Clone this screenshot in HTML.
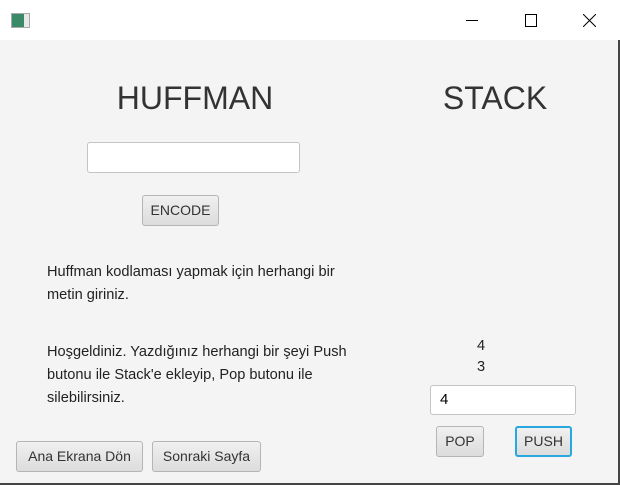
<!DOCTYPE html><html><head><style>
body{margin:0;width:620px;height:485px;overflow:hidden;background:#f4f4f4;font-family:"Liberation Sans",sans-serif;position:relative}
.tb{position:absolute;left:0;top:0;width:620px;height:40px;background:#fff}
.a{position:absolute}
.btn{position:absolute;box-sizing:border-box;border:1px solid #b5b5b5;border-radius:3px;background:linear-gradient(#f0f0f0,#dcdcdc);font-size:14px;color:#333;text-align:center}
.fld{position:absolute;box-sizing:border-box;border:1px solid #c4c4c4;border-radius:3px;background:#fff}
.t{position:absolute;font-size:14.6px;color:#222;line-height:23px}
</style></head><body>
<div class="tb"></div>
<div class="a" style="left:11px;top:13px;width:17px;height:13px;border:1px solid #aaa;background:linear-gradient(90deg,#3a8a6a 70%,#e8e8e8 70%)"></div>
<div class="a" style="left:466px;top:20px;width:12px;height:1px;background:#000"></div>
<div class="a" style="left:525px;top:14px;width:10px;height:11px;border:1px solid #000"></div>
<svg class="a" style="left:583px;top:14px" width="13" height="13"><path d="M0 0L13 13M13 0L0 13" stroke="#000" stroke-width="1"/></svg>
<div class="a" style="left:0;top:80px;width:390px;text-align:center;font-size:32px;color:#333">HUFFMAN</div>
<div class="a" style="left:400px;top:80px;width:190px;text-align:center;font-size:32px;color:#333">STACK</div>
<div class="fld" style="left:87px;top:142px;width:213px;height:31px"></div>
<div class="btn" style="left:142px;top:195px;width:77px;height:31px;line-height:29px">ENCODE</div>
<div class="t" style="left:47px;top:261px">Huffman kodlaması yapmak için herhangi bir<br>metin giriniz.</div>
<div class="t" style="left:47px;top:341px">Hoşgeldiniz. Yazdığınız herhangi bir şeyi Push<br>butonu ile Stack'e ekleyip, Pop butonu ile<br>silebilirsiniz.</div>
<div class="btn" style="left:16px;top:441px;width:127px;height:31px;line-height:29px">Ana Ekrana Dön</div>
<div class="btn" style="left:152px;top:441px;width:109px;height:31px;line-height:29px">Sonraki Sayfa</div>
<div class="t" style="left:477px;top:335px">4</div>
<div class="t" style="left:477px;top:356px">3</div>
<div class="fld" style="left:430px;top:385px;width:146px;height:30px;font-size:15px;line-height:28px;padding-left:9px">4</div>
<div class="btn" style="left:436px;top:426px;width:48px;height:31px;line-height:29px">POP</div>
<div class="btn" style="left:515px;top:426px;width:57px;height:31px;border:2px solid #29a8e0;line-height:27px">PUSH</div>
<div class="a" style="left:618px;top:40px;width:2px;height:445px;background:#444"></div>
<div class="a" style="left:0;top:483px;width:620px;height:2px;background:#444"></div>
</body></html>
